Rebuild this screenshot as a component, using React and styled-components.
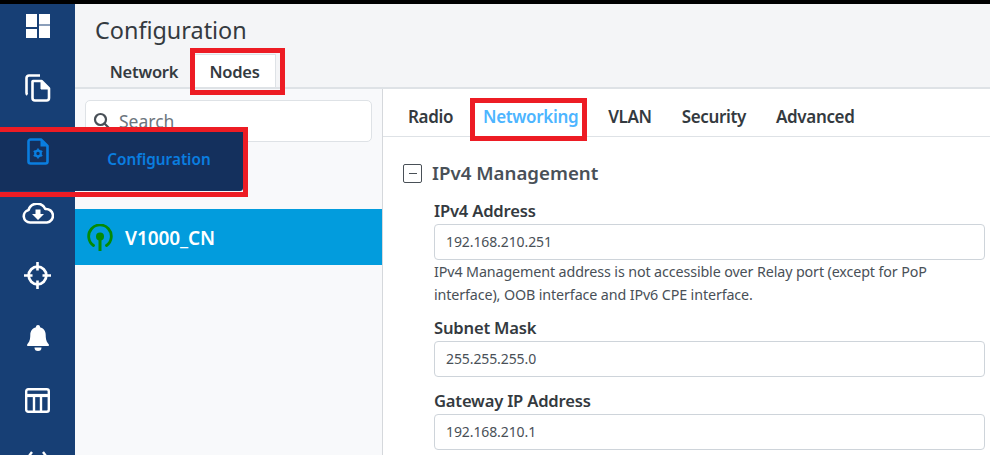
import React from "react";
import styled, { createGlobalStyle } from "styled-components";

const Global = createGlobalStyle`
  html, body { margin: 0; padding: 0; background: #f8f9fb; }
  * { box-sizing: border-box; }
`;
const FONT = `"Noto Sans", "Open Sans", sans-serif`;

const Page = styled.div`
  position: relative; width: 990px; height: 455px; overflow: hidden;
  font-family: ${FONT}; color: #343a40; display: flex; flex-direction: column;
  border-top: 4px solid #000; background: #f8f9fb;
`;
const Body = styled.div`display: flex; flex: 1; min-height: 0;`;
const Sidebar = styled.nav`
  width: 75px; flex: none; background: #173f75; display: flex; flex-direction: column; align-items: center;
`;
const NavSlot = styled.div`
  height: 62.5px; flex: none; display: flex; align-items: center; justify-content: center; color: #fff; padding-bottom: 19px;
`;
const Main = styled.main`flex: 1; min-width: 0; display: flex; flex-direction: column;`;
const Header = styled.header`
  height: 85px; flex: none; padding: 10px 0 0 20px; border-bottom: 2px solid #dee2e6; display: flex; flex-direction: column; background: #f4f5f7;
`;
const Title = styled.h1`margin: 0; font-size: 23.4px; line-height: 32px; font-weight: 400; color: #343a40;`;
const TopTabs = styled.div`display: flex; margin-top: 8px;`;
const TopTab = styled.div`
  height: 33px; font-size: 16.5px; font-weight: 600; line-height: 33px; letter-spacing: -0.25px; color: #343a40;
  background: ${p => (p.$active ? "#fff" : "transparent")};
  border: 1px solid ${p => (p.$active ? "#dee2e6" : "transparent")}; border-bottom: none;
  width: ${p => p.$w}px; text-align: center; white-space: nowrap;
`;
const Split = styled.div`flex: 1; display: flex; min-height: 0;`;
const ListPane = styled.aside`width: 308px; flex: none; border-right: 1px solid #d5d8dc; display: flex; flex-direction: column;`;
const SearchWrap = styled.div`padding: 11px 10px 0; height: 120px; flex: none;`;
const SearchBox = styled.div`
  height: 42px; border: 1px solid #dee2e6; border-radius: 5px; background: #fff; display: flex; align-items: center; gap: 8px;
  padding: 0 7px; color: #6c757d; font-size: 17.5px;
`;
const NodeRow = styled.div`
  height: 56px; flex: none; background: #029cdd; display: flex; align-items: center; gap: 12px; padding: 1px 0 0 12px;
  color: #fff; font-size: 19px; font-weight: 600; letter-spacing: -0.1px;
`;
const Detail = styled.section`flex: 1; min-width: 0; background: #fff; display: flex; flex-direction: column;`;
const SubTabs = styled.div`height: 48px; flex: none; display: flex; gap: 30px; padding: 7px 0 0 25px; border-bottom: 1px solid #dee2e6; align-items: center;`;
const SubTab = styled.div`font-size: 17px; font-weight: 600; letter-spacing: -0.35px; color: ${p => (p.$active ? "#4db5ff" : "#343a40")};`;
const Form = styled.div`padding: 20px 5px 0 20px;`;
const SectionHead = styled.div`display: flex; align-items: center; gap: 10px; height: 30px; font-size: 18.7px; font-weight: 600; color: #495057;`;
const Toggle = styled.span`
  width: 19px; height: 19px; margin-top: 2px; border: 1.5px solid #495057; border-radius: 2px; display: flex; align-items: center; justify-content: center;
  &::before { content: ""; width: 8px; height: 1px; background: #495057; }
`;
const Fields = styled.div`padding-left: 31px; margin-top: 12px;`;
const Label = styled.label`display: block; font-size: 16.6px; font-weight: 600; line-height: 24px; letter-spacing: -0.2px; color: #343a40; margin-top: ${p => p.$mt || 0}px;`;
const Input = styled.div`
  height: 36px; border: 1px solid #ced4da; border-radius: 4px; background: #fff; padding: 0 11px; margin-top: 1px;
  font-size: 14px; line-height: 34px; color: #495057; letter-spacing: -0.1px;
`;
const Help = styled.p`margin: 0; font-size: 14.3px; line-height: 23px; color: #495057; letter-spacing: -0.12px;`;

const Flyout = styled.div`
  position: absolute; left: 0; top: 128px; width: 243px; height: 59px; background: #14305d;
  display: flex; align-items: center; border-bottom-right-radius: 3px;
`;
const FlyoutIcon = styled.div`width: 75px; flex: none; display: flex; justify-content: center; margin-top: -21px; color: #0a7ee0;`;
const FlyoutText = styled.div`flex: 1; text-align: center; color: #0a7ee0; font-size: 15.3px; font-weight: 600; margin-top: -5px;`;
const Mark = styled.div`
  position: absolute; border: 5px solid #ed1c24; pointer-events: none;
  left: ${p => p.$x}px; top: ${p => p.$y}px; width: ${p => p.$w}px; height: ${p => p.$h}px;
`;

const DashIcon = () => (
  <svg width="24" height="24" viewBox="0 0 24 24" fill="#fff">
    <rect x="0" y="0" width="11" height="13" /><rect x="0" y="15" width="11" height="9" />
    <rect x="13" y="0" width="11" height="10.500" /><rect x="13" y="11.500" width="11" height="12.500" />
  </svg>
);
const CopyIcon = () => (
  <svg width="26" height="28" viewBox="0 0 26 28" fill="none" stroke="#fff" strokeWidth="2.600" strokeLinejoin="round">
    <path d="M15 1.500H4a2.500 2.500 0 0 0-2.500 2.500v15a2 2 0 0 0 1 1.700" />
    <path d="M8 7h8.500l7.500 7.500V24a2.500 2.500 0 0 1-2.500 2.500H10A2.500 2.500 0 0 1 7.500 24V7.500z" />
    <path d="M16 7.500v7.500h8" fill="#fff" strokeWidth="1" />
  </svg>
);
const ConfigIcon = () => (
  <svg width="22" height="27" viewBox="0 0 22 27" fill="none">
    <path d="M3.500 1.500H14L20.500 8v15.500a2 2 0 0 1-2 2h-15a2 2 0 0 1-2-2v-20a2 2 0 0 1 2-2z" stroke="currentColor" strokeWidth="2.600" strokeLinejoin="round" />
    <path d="M13.500 2v6.500H20z" fill="currentColor" />
    <circle cx="11" cy="15.500" r="2.800" stroke="currentColor" strokeWidth="2.200" />
    <path d="M11 10.500v10M6.700 13l8.600 5M6.700 18l8.600-5" stroke="currentColor" strokeWidth="1.700" strokeDasharray="2.200 5.600" />
  </svg>
);
const CloudIcon = () => (
  <svg width="32" height="21" viewBox="0 0 32 21" fill="none">
    <path d="M8 19.500a6.300 6.300 0 0 1-1.500-12.400A9 9 0 0 1 23.300 6a6.800 6.800 0 0 1 1.700 13.500z" stroke="#fff" strokeWidth="2.600" strokeLinejoin="round" />
    <path d="M13.500 6.500h5V11h3.500L16 17l-6-6h3.500z" fill="#fff" />
  </svg>
);
const TargetIcon = () => (
  <svg width="27" height="27" viewBox="0 0 27 27" fill="none" stroke="#fff">
    <circle cx="13.500" cy="13.500" r="8.800" strokeWidth="2.800" />
    <path d="M13.500 0v8.500M13.500 18.500v8.500M0 13.500h8.500M18.500 13.500h8.500" strokeWidth="2.600" />
  </svg>
);
const BellIcon = () => (
  <svg width="22" height="26" viewBox="0 0 22 26" fill="#fff">
    <path d="M11 0a2 2 0 0 1 2 2.200c3.600.8 5.700 3.800 5.700 7.600 0 5 1 7.400 3.100 9.500v1.700H.2v-1.700c2.100-2.100 3.100-4.500 3.100-9.500 0-3.800 2.100-6.800 5.700-7.600A2 2 0 0 1 11 0z" />
    <path d="M7.500 22.500h7a3.500 3.500 0 0 1-7 0z" />
  </svg>
);
const TableIcon = () => (
  <svg width="25" height="25" viewBox="0 0 25 25" fill="none" stroke="#fff" strokeWidth="2.400">
    <rect x="1.200" y="1.200" width="22.600" height="22.600" rx="2" />
    <path d="M1.200 7.500h22.600" strokeWidth="3.200" />
    <path d="M9 8v16M16 8v16" />
  </svg>
);
const MoreIcon = () => (
  <svg width="25" height="25" viewBox="0 0 25 25" fill="none" stroke="#fff" strokeWidth="2.400">
    <path d="M7 1l-3 4M18 1l3 4" />
  </svg>
);
const SearchIcon = () => (
  <svg width="18" height="18" viewBox="0 0 18 18" fill="none" stroke="#495057" strokeWidth="2.200">
    <circle cx="7.500" cy="7.500" r="5.500" /><path d="M11.500 11.500L16.500 16.500" strokeLinecap="round" />
  </svg>
);
const RadioIcon = () => (
  <svg width="26" height="28" viewBox="0 0 26 28" fill="none">
    <path d="M6.500 21.500a11.300 11.300 0 1 1 13 0" stroke="#058a05" strokeWidth="2.800" strokeLinecap="round" />
    <circle cx="13" cy="12.500" r="4" fill="#058a05" />
    <path d="M13 14v13" stroke="#058a05" strokeWidth="3" />
  </svg>
);

export default function App() {
  return (
    <Page>
      <Global />
      <Body>
        <Sidebar>
          <NavSlot><DashIcon /></NavSlot>
          <NavSlot><CopyIcon /></NavSlot>
          <NavSlot />
          <NavSlot><CloudIcon /></NavSlot>
          <NavSlot><TargetIcon /></NavSlot>
          <NavSlot><BellIcon /></NavSlot>
          <NavSlot><TableIcon /></NavSlot>
          <NavSlot><MoreIcon /></NavSlot>
        </Sidebar>
        <Main>
          <Header>
            <Title>Configuration</Title>
            <TopTabs>
              <TopTab $w={98}>Network</TopTab>
              <TopTab $active $w={83}>Nodes</TopTab>
            </TopTabs>
          </Header>
          <Split>
            <ListPane>
              <SearchWrap>
                <SearchBox><SearchIcon />Search</SearchBox>
              </SearchWrap>
              <NodeRow><RadioIcon />V1000_CN</NodeRow>
            </ListPane>
            <Detail>
              <SubTabs>
                <SubTab>Radio</SubTab>
                <SubTab $active>Networking</SubTab>
                <SubTab>VLAN</SubTab>
                <SubTab>Security</SubTab>
                <SubTab>Advanced</SubTab>
              </SubTabs>
              <Form>
                <SectionHead><Toggle />IPv4 Management</SectionHead>
                <Fields>
                  <Label>IPv4 Address</Label>
                  <Input>192.168.210.251</Input>
                  <Help>IPv4 Management address is not accessible over Relay port (except for PoP interface), OOB interface and IPv6 CPE interface.</Help>
                  <Label $mt={10}>Subnet Mask</Label>
                  <Input>255.255.255.0</Input>
                  <Label $mt={12}>Gateway IP Address</Label>
                  <Input>192.168.210.1</Input>
                </Fields>
              </Form>
            </Detail>
          </Split>
        </Main>
      </Body>
      <Flyout>
        <FlyoutIcon><ConfigIcon /></FlyoutIcon>
        <FlyoutText>Configuration</FlyoutText>
      </Flyout>
      <Mark $x={190} $y={44} $w={95} $h={47} />
      <Mark $x={470} $y={94} $w={117} $h={43} />
      <Mark $x={-6} $y={123} $w={254} $h={70} />
    </Page>
  );
}
